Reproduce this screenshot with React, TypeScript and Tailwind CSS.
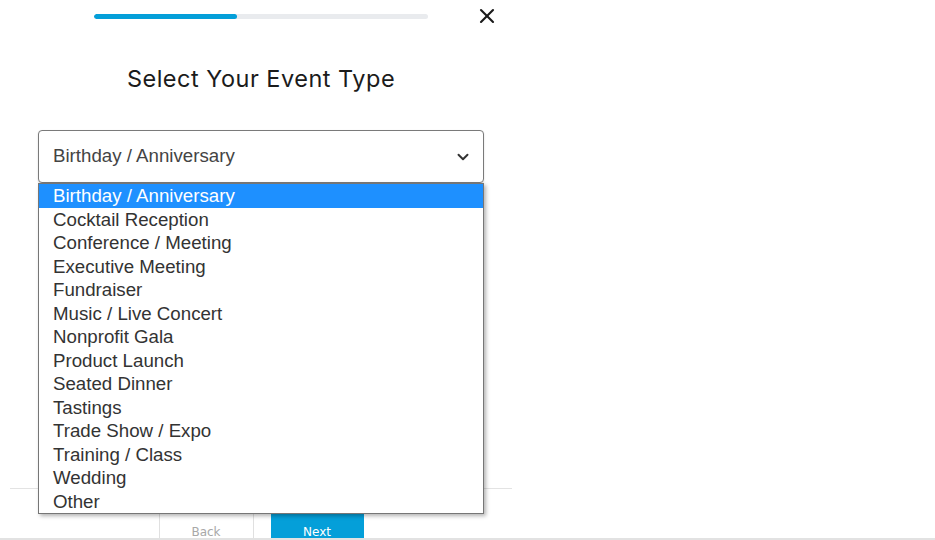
import { ChevronDown, X } from "lucide-react";

const eventTypes = [
  "Birthday / Anniversary",
  "Cocktail Reception",
  "Conference / Meeting",
  "Executive Meeting",
  "Fundraiser",
  "Music / Live Concert",
  "Nonprofit Gala",
  "Product Launch",
  "Seated Dinner",
  "Tastings",
  "Trade Show / Expo",
  "Training / Class",
  "Wedding",
  "Other",
];

export default function App() {
  const selected = eventTypes[0];

  return (
    <div className="relative w-[935px] h-[540px] overflow-hidden bg-white">
      <div className="relative w-[522px] h-[540px] flex flex-col items-center">
        {/* Progress */}
        <div className="mt-[14px] w-[334px] h-[5px] rounded-full bg-[#e9ebee] overflow-hidden">
          <div className="h-full w-[143px] rounded-full bg-[#049fd9]" />
        </div>
        <button className="absolute left-[475px] top-[4px] text-[#1a1a1a]">
          <X size={24} strokeWidth={2.1} />
        </button>

        {/* Title */}
        <h1
          className="mt-[45px] text-[23.5px] leading-[30px] text-[#1b1b1b] tracking-[0.5px]"
          style={{ fontFamily: "Inter, 'Open Sans', sans-serif" }}
        >
          Select Your Event Type
        </h1>

        {/* Select */}
        <div
          className="relative mt-[36px] w-[446px] h-[53px] rounded-[4px] border border-[#7a7a7a] bg-white flex items-center justify-between pl-[14px] pr-[11px] shadow-[0_1px_2px_rgba(0,0,0,0.15)]"
          style={{ fontFamily: "'Liberation Sans', Arial, sans-serif" }}
        >
          <span className="text-[18.7px] text-[#444]">{selected}</span>
          <ChevronDown size={18} strokeWidth={2.6} className="text-[#333]" />

          {/* Open list */}
          <ul className="absolute left-[-1px] top-[52px] w-[446px] bg-white border border-[#767676] shadow-[2px_2px_4px_rgba(0,0,0,0.3)] z-10">
            {eventTypes.map((t) => (
              <li
                key={t}
                className={
                  t === selected
                    ? "h-[23.5px] leading-[23.5px] pl-[14px] text-[18.7px] bg-[#1e90ff] text-white"
                    : "h-[23.5px] leading-[23.5px] pl-[14px] text-[18.7px] text-[#333]"
                }
              >
                {t}
              </li>
            ))}
          </ul>
        </div>

        <div className="flex-1" />

        {/* Footer */}
        <div className="w-[502px] h-px bg-[#e3e3e3]" />
        <div
          className="mt-[25px] flex gap-[17px] h-[26px]"
          style={{ fontFamily: "'DejaVu Sans', Verdana, sans-serif" }}
        >
          <button className="w-[95px] h-full border-x border-[#e0e0e0] bg-white text-[12px] text-[#a8a8a8] pt-[9px]">
            Back
          </button>
          <button className="w-[93px] h-full bg-[#049fd9] text-[12px] text-white pt-[9px]">
            Next
          </button>
        </div>
      </div>
      <div className="absolute left-0 right-0 bottom-0 h-[2px] bg-[#e2e2e2]" />
    </div>
  );
}
